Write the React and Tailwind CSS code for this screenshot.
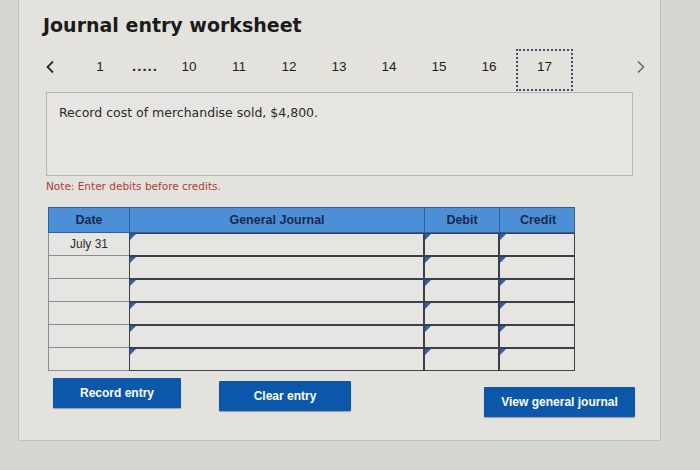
const PAGES = ["10", "11", "12", "13", "14", "15", "16"];
const ROWS = [0, 1, 2, 3, 4, 5];

const Tri = () => (
  <span className="absolute left-0 top-0 w-0 h-0 border-t-[6px] border-r-[6px] border-t-[#2f5fae] border-r-transparent" />
);

const Cell = ({ w }) => (
  <div className={`relative ${w} h-[23px] bg-[#e7e5e1] border-[1.5px] border-[#3a3f4a]`}>
    <Tri />
  </div>
);

const Btn = ({ label, w, mt }) => (
  <button
    className={`${w} ${mt} h-[30px] bg-[#0c57aa] text-white text-[12px] font-bold rounded-[1px] shadow-[0_1px_1px_rgba(0,0,0,0.3)]`}
    style={{ fontFamily: '"Liberation Sans", Arial, sans-serif' }}
  >
    {label}
  </button>
);

export default function App() {
  return (
    <div
      className="w-[700px] h-[470px] bg-[#d8d6d1] overflow-hidden"
      style={{ fontFamily: '"Liberation Sans", Arial, sans-serif' }}
    >
      <div className="ml-[18px] w-[643px] h-[441px] bg-[#e4e2dd] border-l border-r border-b border-[#c4c2bd]">
        {/* Title */}
        <h1
          className="pt-[13px] pl-[24px] text-[19px] leading-[24px] font-bold text-[#1b1b1b]"
          style={{ fontFamily: '"DejaVu Sans", Verdana, sans-serif' }}
        >
          Journal entry worksheet
        </h1>

        {/* Pager */}
        <div className="mt-[13px] flex items-center h-[42px] text-[13.5px] text-[#1f1f1f]">
          <div className="ml-[21px] w-[20px] flex justify-center pb-[8px]">
            <svg width="10" height="14" viewBox="0 0 10 14">
              <path d="M8 1.5 L2.5 7 L8 12.5" fill="none" stroke="#2a2a2a" strokeWidth="1.8" />
            </svg>
          </div>
          <div className="ml-[30px] w-[20px] text-center pb-[8px]">1</div>
          <div className="ml-[16px] w-[38px] text-center font-bold text-[15px] tracking-[1px] text-[#2a2a2a] pb-[10px]">.....</div>
          {PAGES.map((p) => (
            <div key={p} className="w-[50px] text-center pb-[8px]">
              {p}
            </div>
          ))}
          <div className="ml-[2px] w-[57px] h-[42px] mt-[-2px] border-[2.5px] border-dotted border-[#3d4f6b] flex items-center justify-center pb-[6px]">
            17
          </div>
          <div className="ml-[58px] w-[20px] flex justify-center pb-[8px]">
            <svg width="10" height="14" viewBox="0 0 10 14">
              <path d="M2 1.5 L7.5 7 L2 12.5" fill="none" stroke="#6a6a6a" strokeWidth="1.6" />
            </svg>
          </div>
        </div>

        {/* Prompt box */}
        <div className="ml-[27px] w-[587px] h-[84px] bg-[#e7e5e1] border border-[#b9b7b2] pl-[12px] pt-[11px]">
          <p
            className="text-[12.5px] text-[#2a2a2a]"
            style={{ fontFamily: '"DejaVu Sans", Verdana, sans-serif' }}
          >
            Record cost of merchandise sold, $4,800.
          </p>
        </div>

        <p
          className="mt-[3px] ml-[27px] text-[10.5px] leading-[14px] text-[#a8413a]"
          style={{ fontFamily: '"DejaVu Sans", Verdana, sans-serif' }}
        >
          Note: Enter debits before credits.
        </p>

        {/* Table */}
        <div className="mt-[14px] ml-[29px] w-[527px]">
          <div className="grid grid-cols-[81px_295px_75px_76px] h-[26px] bg-[#4c8fd6] border border-[#2d5f9e] text-[12.5px] font-bold text-[#172a4f]">
            <div className="flex items-center justify-center border-r border-[#2d5f9e]">Date</div>
            <div className="flex items-center justify-center border-r border-[#2d5f9e]">General Journal</div>
            <div className="flex items-center justify-center border-r border-[#2d5f9e]">Debit</div>
            <div className="flex items-center justify-center">Credit</div>
          </div>
          {ROWS.map((r) => (
            <div key={r} className="flex">
              <div className="w-[81px] h-[23px] bg-[#e7e5e1] border-l-[1.5px] border-b border-[#8d8d8d] flex items-center justify-center text-[12px] text-[#2a2a2a]">
                {r === 0 ? "July 31" : ""}
              </div>
              <Cell w="w-[295px]" />
              <Cell w="w-[75px]" />
              <Cell w="w-[76px]" />
            </div>
          ))}
        </div>

        {/* Buttons */}
        <div className="flex items-start mt-[7px]">
          <Btn label="Record entry" w="ml-[34px] w-[128px]" mt="mt-0" />
          <Btn label="Clear entry" w="ml-[38px] w-[132px]" mt="mt-[3px]" />
          <Btn label="View general journal" w="ml-[133px] w-[151px]" mt="mt-[9px]" />
        </div>
      </div>
    </div>
  );
}
